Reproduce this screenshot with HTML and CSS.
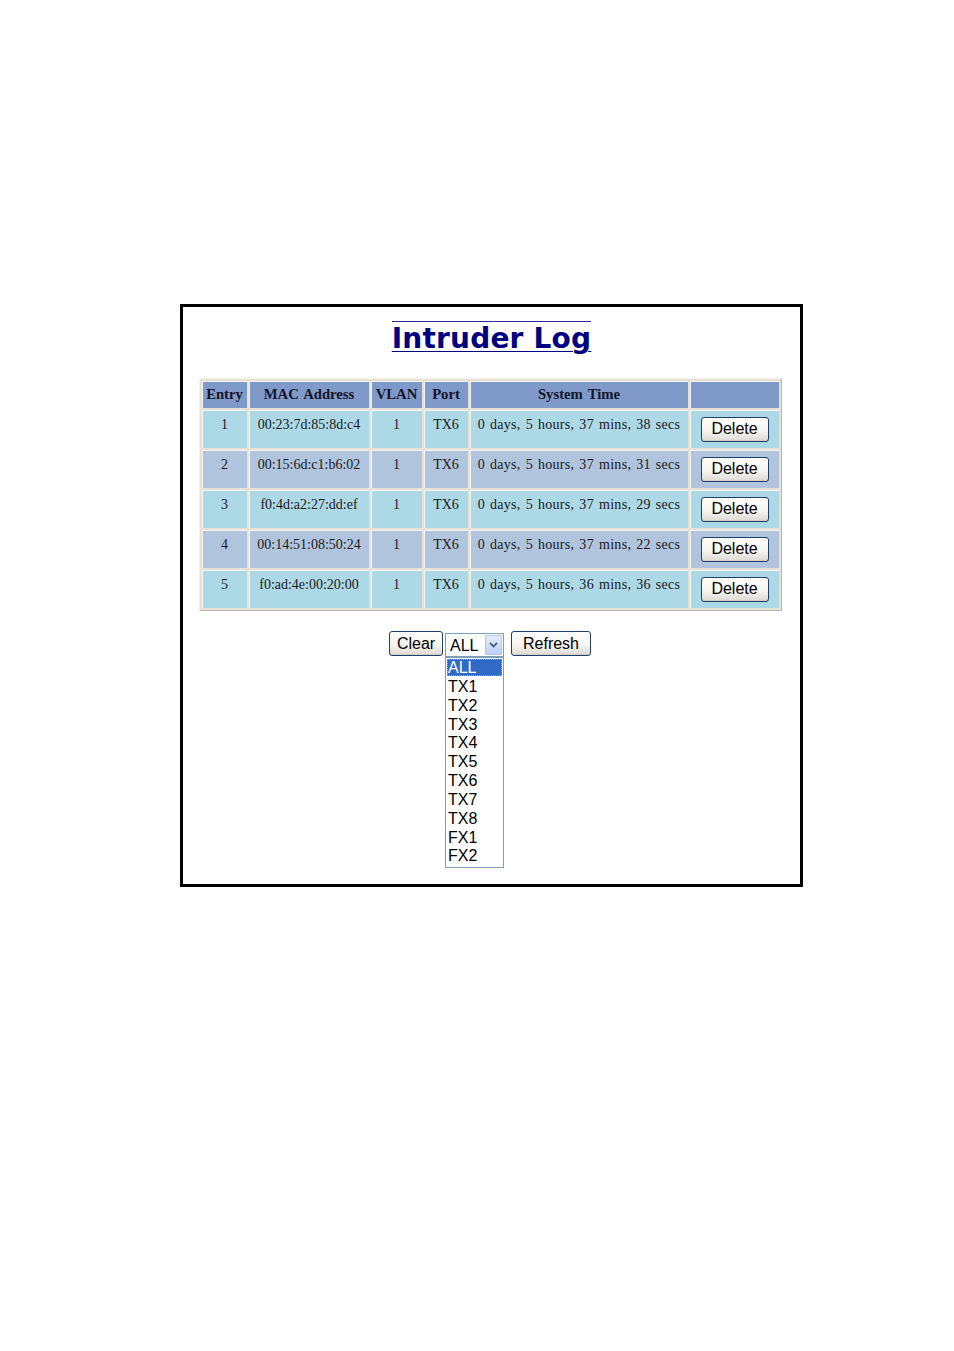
FILE: index.html
```html
<!DOCTYPE html>
<html>
<head>
<meta charset="utf-8">
<title>Intruder Log</title>
<link rel="stylesheet" href="styles.css">
</head>
<body>
<div class="frame">
  <div class="title-wrap"><h1 class="title">Intruder Log</h1></div>
  <table class="log">
    <thead>
      <tr>
        <th class="c-entry">Entry</th>
        <th class="c-mac">MAC Address</th>
        <th class="c-vlan">VLAN</th>
        <th class="c-port">Port</th>
        <th class="c-time">System Time</th>
        <th class="c-act"></th>
      </tr>
    </thead>
    <tbody>
      <tr class="odd">
        <td>1</td><td>00:23:7d:85:8d:c4</td><td>1</td><td>TX6</td><td class="time">0 days, 5 hours, 37 mins, 38 secs</td>
        <td class="act"><button class="btn del">Delete</button></td>
      </tr>
      <tr class="even">
        <td>2</td><td>00:15:6d:c1:b6:02</td><td>1</td><td>TX6</td><td class="time">0 days, 5 hours, 37 mins, 31 secs</td>
        <td class="act"><button class="btn del">Delete</button></td>
      </tr>
      <tr class="odd">
        <td>3</td><td>f0:4d:a2:27:dd:ef</td><td>1</td><td>TX6</td><td class="time">0 days, 5 hours, 37 mins, 29 secs</td>
        <td class="act"><button class="btn del">Delete</button></td>
      </tr>
      <tr class="even">
        <td>4</td><td>00:14:51:08:50:24</td><td>1</td><td>TX6</td><td class="time">0 days, 5 hours, 37 mins, 22 secs</td>
        <td class="act"><button class="btn del">Delete</button></td>
      </tr>
      <tr class="odd">
        <td>5</td><td>f0:ad:4e:00:20:00</td><td>1</td><td>TX6</td><td class="time">0 days, 5 hours, 36 mins, 36 secs</td>
        <td class="act"><button class="btn del">Delete</button></td>
      </tr>
    </tbody>
  </table>
  <div class="controls">
    <button class="btn clear">Clear</button>
    <div class="select">
      <span class="select-value">ALL</span>
      <span class="select-arrow">
        <svg width="9" height="6" viewBox="0 0 9 6"><path d="M1 1 L4.5 4.5 L8 1" fill="none" stroke="#4d6185" stroke-width="1.8"/></svg>
      </span>
      <ul class="listbox">
        <li class="sel">ALL</li>
        <li>TX1</li>
        <li>TX2</li>
        <li>TX3</li>
        <li>TX4</li>
        <li>TX5</li>
        <li>TX6</li>
        <li>TX7</li>
        <li>TX8</li>
        <li>FX1</li>
        <li>FX2</li>
      </ul>
    </div>
    <button class="btn refresh">Refresh</button>
  </div>
</div>
</body>
</html>
```

FILE: styles.css
```css
html, body {
  margin: 0;
  padding: 0;
  background: #ffffff;
}

.frame {
  margin: 304px 0 0 180px;
  width: 617px;
  height: 577px;
  border: 3px solid #000000;
  background: #ffffff;
}

.title-wrap {
  text-align: center;
  padding-top: 14px;
}

.title {
  display: inline-block;
  margin: 0;
  padding-top: 2px;
  border-top: 1px solid #2a2a9a;
  font-family: "DejaVu Sans", Verdana, sans-serif;
  font-weight: bold;
  font-size: 28px;
  line-height: 30px;
  letter-spacing: 0.2px;
  color: #000080;
  text-decoration: underline;
  text-decoration-thickness: 1px;
  text-underline-offset: 3px;
}

.log {
  margin: 24px auto 0;
  width: 583px;
  border-collapse: separate;
  border-spacing: 2px;
  background: #e6e2d6;
  border-style: solid;
  border-width: 1px;
  border-color: #f4f2ea #b8b4a8 #b8b4a8 #f4f2ea;
  font-family: "Liberation Serif", "Times New Roman", serif;
  font-size: 14px;
  color: #1a1a1a;
  position: relative;
  left: -1px;
}

.log th,
.log td {
  padding: 0;
  text-align: center;
  box-shadow: inset 1px 1px 0 #f6f4ee;
}

.log th {
  height: 27px;
  background: #7f99c9;
  font-weight: bold;
  font-size: 14.7px;
  word-spacing: 1.5px;
  color: #141428;
}

.log td {
  height: 38px;
  vertical-align: top;
  padding-top: 7px;
  box-sizing: border-box;
  white-space: nowrap;
}

.log td.time {
  letter-spacing: 0.3px;
  word-spacing: 1.2px;
}

.log td.act {
  vertical-align: middle;
  padding-top: 0;
}

.log tr.odd td { background: #add8e6; }
.log tr.even td { background: #b0c4de; }

.c-entry { width: 45px; }
.c-mac { width: 120px; }
.c-vlan { width: 51px; }
.c-port { width: 44px; }
.c-time { width: 218px; }
.c-act { width: 89px; }

.btn {
  font-family: "Liberation Sans", Arial, sans-serif;
  font-size: 16px;
  color: #000000;
  height: 25px;
  padding: 0;
  margin: 0;
  border: 1px solid #1f3f6a;
  border-radius: 3px;
  background: linear-gradient(#ffffff 0%, #f6f5f0 55%, #dcdad2 100%);
  box-shadow: inset 0 -1px 0 #cfcdc4;
  line-height: 22px;
  cursor: default;
}

.del { width: 68px; display: block; margin: 0 auto; }
.clear { width: 54px; }
.refresh { width: 80px; margin-left: 7px; }

.controls {
  display: flex;
  justify-content: center;
  align-items: flex-start;
  margin-top: 20px;
  padding-right: 3px;
}

.select {
  position: relative;
  margin-left: 2px;
  margin-top: 2px;
  width: 59px;
  height: 24px;
  box-sizing: border-box;
  border: 1px solid #7f9db9;
  background: #ffffff;
  display: flex;
  align-items: center;
  justify-content: space-between;
  font-family: "Liberation Sans", Arial, sans-serif;
  font-size: 16px;
  color: #000000;
}

.select-value {
  padding-left: 4px;
  padding-top: 2px;
}

.select-arrow {
  width: 15px;
  height: 18px;
  margin-right: 1px;
  border: 1px solid #b4c6ee;
  border-radius: 1px;
  background: linear-gradient(#e4ecfd, #bccff7);
  display: flex;
  align-items: center;
  justify-content: center;
}

.listbox {
  position: absolute;
  left: -1px;
  top: calc(100% + 1px);
  width: 59px;
  box-sizing: border-box;
  margin: 0;
  padding: 1px;
  list-style: none;
  border: 1px solid #7f9db9;
  background: #ffffff;
}

.listbox li {
  height: 18.85px;
  line-height: 18.85px;
  padding-left: 1px;
  font-family: "Liberation Sans", Arial, sans-serif;
  font-size: 16px;
  color: #000000;
}

.listbox li.sel {
  height: 17px;
  line-height: 17px;
  margin-bottom: 1.85px;
  background: #316ac5;
  color: #ffffff;
  outline: 1px dotted #d8a040;
  outline-offset: -1px;
}
```
